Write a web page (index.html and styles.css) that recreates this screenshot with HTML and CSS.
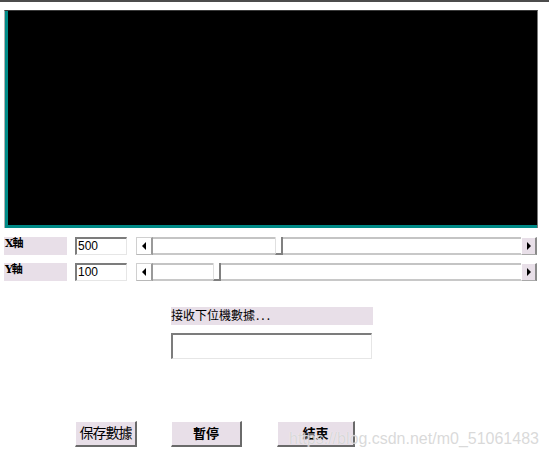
FILE: index.html
```html
<!DOCTYPE html>
<html lang="zh-Hant">
<head>
<meta charset="utf-8">
<title>接收下位機數據</title>
<link rel="stylesheet" href="styles.css">
</head>
<body>
<div class="window">
  <div class="topline"></div>
  <div class="display"><div class="display-inner"></div></div>

  <div class="axis-rows">
    <div class="axis-row">
      <div class="axis-label">X軸</div>
      <div class="edit axis-edit">500</div>
      <div class="scrollbar">
        <div class="sb-btn sb-left"><span class="tri-left"></span></div>
        <div class="sb-track"><div class="sb-thumb" style="left:122px"></div></div>
        <div class="sb-btn sb-right"><span class="tri-right"></span></div>
      </div>
    </div>
    <div class="axis-row">
      <div class="axis-label">Y軸</div>
      <div class="edit axis-edit">100</div>
      <div class="scrollbar">
        <div class="sb-btn sb-left"><span class="tri-left"></span></div>
        <div class="sb-track"><div class="sb-thumb" style="left:60px"></div></div>
        <div class="sb-btn sb-right"><span class="tri-right"></span></div>
      </div>
    </div>
  </div>

  <div class="status">
    <div class="status-label">接收下位機數據<span class="dots">...</span></div>
    <div class="edit status-edit"></div>
  </div>

  <div class="buttons">
    <div class="btn btn-save">保存數據</div>
    <div class="btn btn-pause">暫停</div>
    <div class="btn btn-end">結束</div>
  </div>

  <div class="watermark">https://blog.csdn.net/m0_51061483</div>
</div>
</body>
</html>
```

FILE: styles.css
```css
html, body {
  margin: 0;
  padding: 0;
  background: #ffffff;
}

.window {
  position: relative;
  width: 549px;
  height: 461px;
  display: flex;
  flex-direction: column;
  font-family: "Noto Sans CJK TC", "Liberation Sans", sans-serif;
  color: #000;
  overflow: hidden;
}

.topline {
  height: 2px;
  background: #4c4c4c;
}

.display {
  margin: 8px 0 0 4px;
  width: 534px;
  height: 218px;
  box-sizing: border-box;
  border-left: 1px solid #b0b0b0;
  border-top: 1px solid #3a3a3a;
  border-right: 1px solid #7a7a7a;
  display: flex;
}

.display-inner {
  flex: 1;
  background: #000;
  border-left: 3px solid #008a87;
  border-bottom: 3px solid #008a87;
}

.axis-rows {
  margin-top: 9px;
  display: flex;
  flex-direction: column;
  gap: 8px;
}

.axis-row {
  display: flex;
  align-items: flex-start;
  height: 18px;
}

.axis-label {
  margin-left: 4px;
  width: 63px;
  height: 18px;
  background: #e8dfe8;
  font-family: "DejaVu Serif", "Noto Sans CJK TC", serif;
  font-weight: bold;
  font-size: 11px;
  line-height: 14px;
  letter-spacing: -1px;
  padding-left: 1px;
  box-sizing: border-box;
}

.edit {
  box-sizing: border-box;
  background: #fff;
  border-top: 2px solid #7c7c7c;
  border-left: 2px solid #7c7c7c;
  border-right: 1px solid #e6e6e6;
  border-bottom: 1px solid #e6e6e6;
}

.axis-edit {
  margin-left: 8px;
  width: 52px;
  height: 18px;
  font-family: "Liberation Sans", sans-serif;
  font-size: 12px;
  line-height: 15px;
  padding-left: 1px;
}

.scrollbar {
  margin-left: 9px;
  width: 401px;
  height: 18px;
  display: flex;
}

.sb-btn {
  box-sizing: border-box;
  width: 17px;
  height: 18px;
  display: flex;
  align-items: center;
  justify-content: center;
}

.sb-left {
  background: #fff;
  border-top: 1px solid #d0d0d0;
  border-left: 1px solid #d0d0d0;
  border-right: 2px solid #9a9a9a;
  border-bottom: 1px solid #b8b8b8;
}

.sb-right {
  width: 16px;
  background: #e8dfe8;
  border-top: 1px solid #ffffff;
  border-left: 1px solid #ffffff;
  border-right: 2px solid #8a8a8a;
  border-bottom: 1px solid #a8a8a8;
}

.tri-left {
  width: 0;
  height: 0;
  border-top: 4px solid transparent;
  border-bottom: 4px solid transparent;
  border-right: 4px solid #000;
}

.tri-right {
  width: 0;
  height: 0;
  border-top: 4px solid transparent;
  border-bottom: 4px solid transparent;
  border-left: 4px solid #000;
}

.sb-track {
  position: relative;
  flex: 1;
  box-sizing: border-box;
  background: #fff;
  border-top: 2px solid #c4c4c4;
  border-bottom: 2px solid #c8c8c8;
}

.sb-thumb {
  position: absolute;
  top: -2px;
  width: 8px;
  height: 18px;
  box-sizing: border-box;
  background: #fff;
  border-left: 1px solid #e0e0e0;
  border-right: 2px solid #808080;
  border-bottom: 2px solid #808080;
}

.status {
  margin-top: 26px;
  margin-left: 171px;
  display: flex;
  flex-direction: column;
  gap: 8px;
}

.status-label {
  width: 202px;
  height: 18px;
  background: #e8dfe8;
  font-size: 12px;
  line-height: 15px;
}

.dots {
  letter-spacing: 2px;
  padding-left: 1px;
}

.status-edit {
  width: 201px;
  height: 26px;
}

.buttons {
  margin-top: 62px;
  display: flex;
}

.btn {
  box-sizing: border-box;
  height: 26px;
  background: #e8dfe8;
  border-top: 1px solid #ffffff;
  border-left: 1px solid #ffffff;
  border-right: 2px solid #6a6a6a;
  border-bottom: 2px solid #6a6a6a;
  font-size: 13px;
  font-weight: bold;
  line-height: 21px;
  text-align: center;
}

.btn-save {
  margin-left: 75px;
  width: 62px;
  font-weight: normal;
  font-size: 14px;
  letter-spacing: -1px;
}

.btn-pause {
  margin-left: 34px;
  width: 71px;
}

.btn-end {
  margin-left: 35px;
  width: 78px;
}

.watermark {
  position: absolute;
  left: 289px;
  top: 429px;
  font-family: "Liberation Sans", Arial, sans-serif;
  font-size: 16px;
  line-height: 20px;
  color: rgba(205, 205, 205, 0.75);
  text-shadow: 0 0 1px rgba(255, 255, 255, 0.9);
  white-space: nowrap;
}
```
